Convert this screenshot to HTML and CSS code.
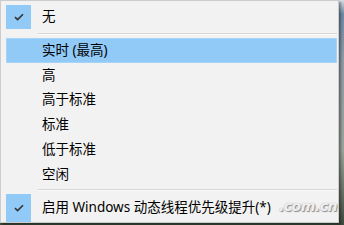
FILE: index.html
```html
<!DOCTYPE html>
<html lang="zh-CN">
<head>
<meta charset="utf-8">
<link rel="stylesheet" href="styles.css">
</head>
<body>
<div class="menu">
  <div class="item first">
    <span class="check on"><svg width="10" height="8" viewBox="0 0 10 8"><path d="M1 4.2 L3.6 6.6 L9 1.2" fill="none" stroke="#333" stroke-width="1.6"/></svg></span>
    <span class="label">无</span>
  </div>
  <div class="sep"></div>
  <div class="item hot"><span class="check"></span><span class="label">实时 (最高)</span></div>
  <div class="item"><span class="check"></span><span class="label">高</span></div>
  <div class="item"><span class="check"></span><span class="label">高于标准</span></div>
  <div class="item"><span class="check"></span><span class="label">标准</span></div>
  <div class="item"><span class="check"></span><span class="label">低于标准</span></div>
  <div class="item"><span class="check"></span><span class="label">空闲</span></div>
  <div class="sep sep2"></div>
  <div class="item last">
    <span class="check on"><svg width="10" height="8" viewBox="0 0 10 8"><path d="M1 4.2 L3.6 6.6 L9 1.2" fill="none" stroke="#333" stroke-width="1.6"/></svg></span>
    <span class="label">启用 Windows 动态线程优先级提升(*)</span>
  </div>
  <span class="mark">.com.cn</span>
</div>
</body>
</html>
```
FILE: styles.css
```css
html, body {
  margin: 0;
  padding: 0;
}
body {
  width: 344px;
  height: 225px;
  background: linear-gradient(180deg, #d8dde2 0px, #6f8aa4 14px, #8e9aa4 60px, #9aa39a 150px, #3c4a3c 225px);
  overflow: hidden;
  font-family: "Noto Sans", "Noto Sans CJK SC", sans-serif;
  font-size: 13.5px;
  color: #000;
}
.menu {
  position: relative;
  box-sizing: border-box;
  width: 339px;
  height: 223px;
  background: #f2f2f2;
  border: 1px solid #cccccc;
  padding: 3px 1px 0 5px;
  box-shadow: 2px 2px 2px rgba(0, 0, 0, 0.35);
  display: flex;
  flex-direction: column;
}
.item {
  height: 25px;
  display: flex;
  align-items: center;
  box-sizing: border-box;
}
.item.first {
  height: 26px;
}
.item.last {
  height: 29px;
}
.item.hot {
  background: #91c9f7;
  border: 1px solid #a6d3f8;
}
.check {
  width: 25px;
  height: 24px;
  display: flex;
  align-items: center;
  justify-content: center;
  flex: none;
}
.item.last .check {
  height: 28px;
}
.check.on {
  background: #91c9f7;
}
.item.hot .check {
  margin-left: -1px;
}
.label {
  margin-left: 11px;
  white-space: nowrap;
  line-height: 1;
}
.sep {
  margin: 3px 0 3px 32px;
  height: 1px;
  background: #d7d7d7;
  border-bottom: 1px solid #fbfbfb;
  flex: none;
}
.sep2 {
  margin: 2px 0 2px 32px;
}
.mark {
  position: absolute;
  left: 278px;
  top: 197px;
  font-family: "DejaVu Sans", sans-serif;
  font-weight: bold;
  font-style: italic;
  font-size: 14px;
  color: rgba(255, 255, 255, 0.85);
  text-shadow: 0 0 1px #9a9a9a, 1px 1px 1px #8a8a8a;
  letter-spacing: -0.5px;
}
```
